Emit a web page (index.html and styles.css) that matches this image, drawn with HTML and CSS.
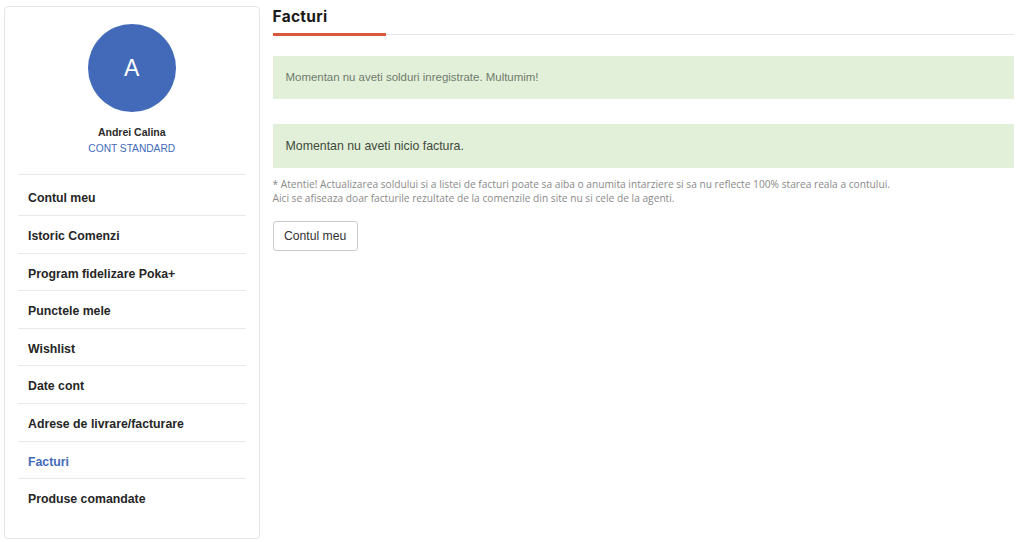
FILE: index.html
```html
<!DOCTYPE html>
<html lang="en">
<head>
  <meta charset="UTF-8">
  <meta name="viewport" content="width=device-width, initial-scale=1.0">
  <title>Facturi</title>
  <link rel="stylesheet" href="styles.css">
</head>
<body>
  <div class="page">
    <aside class="sidebar">
      <div class="avatar">A</div>
      <div class="user-name">Andrei Calina</div>
      <div class="user-type">CONT STANDARD</div>
      <ul class="menu">
        <li><a href="#">Contul meu</a></li>
        <li><a href="#">Istoric Comenzi</a></li>
        <li><a href="#">Program fidelizare Poka+</a></li>
        <li><a href="#">Punctele mele</a></li>
        <li><a href="#">Wishlist</a></li>
        <li><a href="#">Date cont</a></li>
        <li><a href="#">Adrese de livrare/facturare</a></li>
        <li><a href="#" class="active">Facturi</a></li>
        <li><a href="#">Produse comandate</a></li>
      </ul>
    </aside>
    <main class="content">
      <div class="title-bar">
        <h1>Facturi</h1>
      </div>
      <div class="alert alert-small">Momentan nu aveti solduri inregistrate. Multumim!</div>
      <div class="alert">Momentan nu aveti nicio factura.</div>
      <p class="note">* Atentie! Actualizarea soldului si a listei de facturi poate sa aiba o anumita intarziere si sa nu reflecte 100% starea reala a contului.<br>Aici se afiseaza doar facturile rezultate de la comenzile din site nu si cele de la agenti.</p>
      <a href="#" class="btn">Contul meu</a>
    </main>
  </div>
</body>
</html>
```
FILE: styles.css
```css
* {
  box-sizing: border-box;
}

body {
  margin: 0;
  font-family: "Liberation Sans", Arial, sans-serif;
  color: #212529;
  background: #fff;
}

.page {
  display: flex;
  align-items: flex-start;
  gap: 13px;
  height: 542px;
  padding: 0 10px 0 4px;
  overflow: hidden;
}

.sidebar {
  width: 255.5px;
  height: 533px;
  margin-top: 6px;
  padding: 17px 13px 0;
  border: 1px solid #e6e6e6;
  border-radius: 4px;
  flex-shrink: 0;
}

.avatar {
  width: 88px;
  height: 88px;
  margin: 0 auto;
  border-radius: 50%;
  background: #426ab8;
  color: #fff;
  font-size: 23px;
  line-height: 88px;
  text-align: center;
}

.user-name {
  margin-top: 13px;
  font-size: 10.5px;
  font-weight: bold;
  line-height: 14px;
  text-align: center;
  color: #2b2b2b;
}

.user-type {
  margin-top: 2px;
  font-size: 10.2px;
  line-height: 16px;
  text-align: center;
  color: #426ab8;
}

.menu {
  list-style: none;
  margin: 17px 0 0;
  padding: 0;
}

.menu li {
  height: 37.6px;
  border-top: 1px solid #e9e9e9;
}

.menu li:first-child {
  height: 41px;
  padding-top: 3px;
}

.menu a {
  display: block;
  padding-left: 10px;
  font-size: 12.3px;
  font-weight: bold;
  line-height: 40px;
  color: #262626;
  text-decoration: none;
}

.menu a.active {
  color: #426ab8;
}

.content {
  flex: 1;
  min-width: 0;
}

.title-bar {
  height: 35px;
  border-bottom: 1px solid #e6e6e6;
  position: relative;
}

.title-bar h1 {
  margin: 0;
  font-family: Inter, sans-serif;
  font-size: 15.5px;
  font-weight: 700;
  letter-spacing: 0.3px;
  line-height: 33px;
  color: #1a1a1a;
}

/* orange part of the underline */
.title-bar::after {
  content: "";
  position: absolute;
  left: 0;
  bottom: -2px;
  width: 113.5px;
  height: 3px;
  background: #d9573a;
}

.alert {
  height: 44px;
  margin-top: 25px;
  padding-left: 13px;
  background: #e3f0d9;
  font-size: 12.35px;
  line-height: 44px;
  color: #3f4a3c;
}

.alert-small {
  height: 43px;
  margin-top: 21px;
  font-size: 11.45px;
  line-height: 43px;
  color: #6f7a6c;
}

.note {
  margin: 9px 0 0;
  font-family: "Open Sans", sans-serif;
  font-size: 10.2px;
  line-height: 14px;
  color: #8a8a8a;
}

.btn {
  display: inline-block;
  margin-top: 16px;
  padding: 0 10.5px;
  height: 30px;
  border: 1px solid #ccc;
  border-radius: 3px;
  font-size: 12.2px;
  line-height: 28px;
  color: #333;
  text-decoration: none;
}
```
